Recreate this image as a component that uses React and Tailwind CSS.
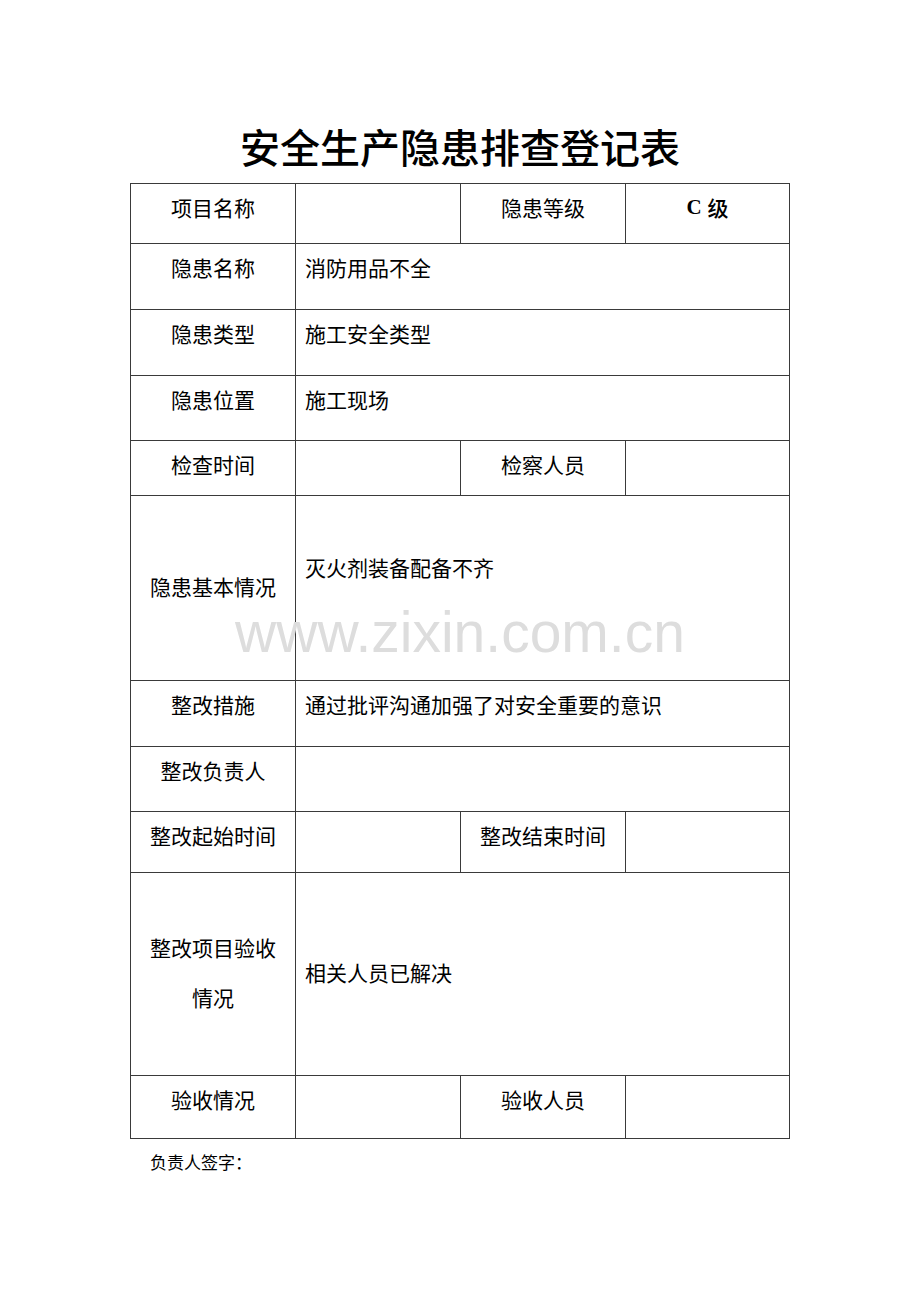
import React from "react";

const F = { fontFamily: '"Noto Sans CJK SC", "Noto Sans", sans-serif' };

function C({ children, className = "" }) {
  return (
    <div className={"border-r border-b border-[#3a3a3a] text-[21px] leading-[22px] text-black " + className}>
      {children}
    </div>
  );
}

export default function App() {
  const L = "flex justify-center pt-[12px]";
  const R = "col-span-3 pl-[9px] pt-[12px]";
  return (
    <div className="relative w-[920px] min-h-[1302px] bg-white" style={F}>
      <h1 className="pt-[124px] pb-[2px] text-center text-[40px] leading-[44px] font-medium text-black">
        安全生产隐患排查登记表
      </h1>
      <div className="mx-auto mt-[13px] w-[660px] grid grid-cols-[165px_165px_165px_164px] grid-rows-[60px_66px_66px_65px_55px_185px_66px_65px_61px_203px_63px] border-l border-t border-[#3a3a3a]">
        <C className={L}>项目名称</C>
        <C className={L}></C>
        <C className={L}>隐患等级</C>
        <C className={L}>
          <span className="font-semibold" style={{ fontFamily: '"Liberation Serif", serif' }}>C</span>
          <span className="ml-[6px] font-medium">级</span>
        </C>

        <C className={L}>隐患名称</C>
        <C className={R}>消防用品不全</C>

        <C className={L}>隐患类型</C>
        <C className={R}>施工安全类型</C>

        <C className={L}>隐患位置</C>
        <C className={R}>施工现场</C>

        <C className={L}>检查时间</C>
        <C className={L}></C>
        <C className={L}>检察人员</C>
        <C className={L}></C>

        <C className="flex items-center justify-center pb-[4px]">隐患基本情况</C>
        <C className="col-span-3 pl-[9px] pt-[60px]">灭火剂装备配备不齐</C>

        <C className={L}>整改措施</C>
        <C className={R}>通过批评沟通加强了对安全重要的意识</C>

        <C className={L}>整改负责人</C>
        <C className={R}></C>

        <C className={L}>整改起始时间</C>
        <C className={L}></C>
        <C className={L}>整改结束时间</C>
        <C className={L}></C>

        <C className="flex items-center justify-center text-center pb-[4px] !leading-[50px]">
          <div>整改项目验收<br />情况</div>
        </C>
        <C className="col-span-3 pl-[9px] flex items-center pb-[4px]">相关人员已解决</C>

        <C className={L}>验收情况</C>
        <C className={L}></C>
        <C className={L}>验收人员</C>
        <C className={L}></C>
      </div>
      <div className="ml-[150px] mt-[12px] text-[17px] leading-[22px] text-black">负责人签字：</div>
      <div
        className="pointer-events-none absolute left-0 right-0 top-[604px] text-center text-[57px] leading-[57px] text-[#dddddd]"
        style={{ fontFamily: '"Liberation Sans", Arial, sans-serif' }}
      >
        www.zixin.com.cn
      </div>
    </div>
  );
}
